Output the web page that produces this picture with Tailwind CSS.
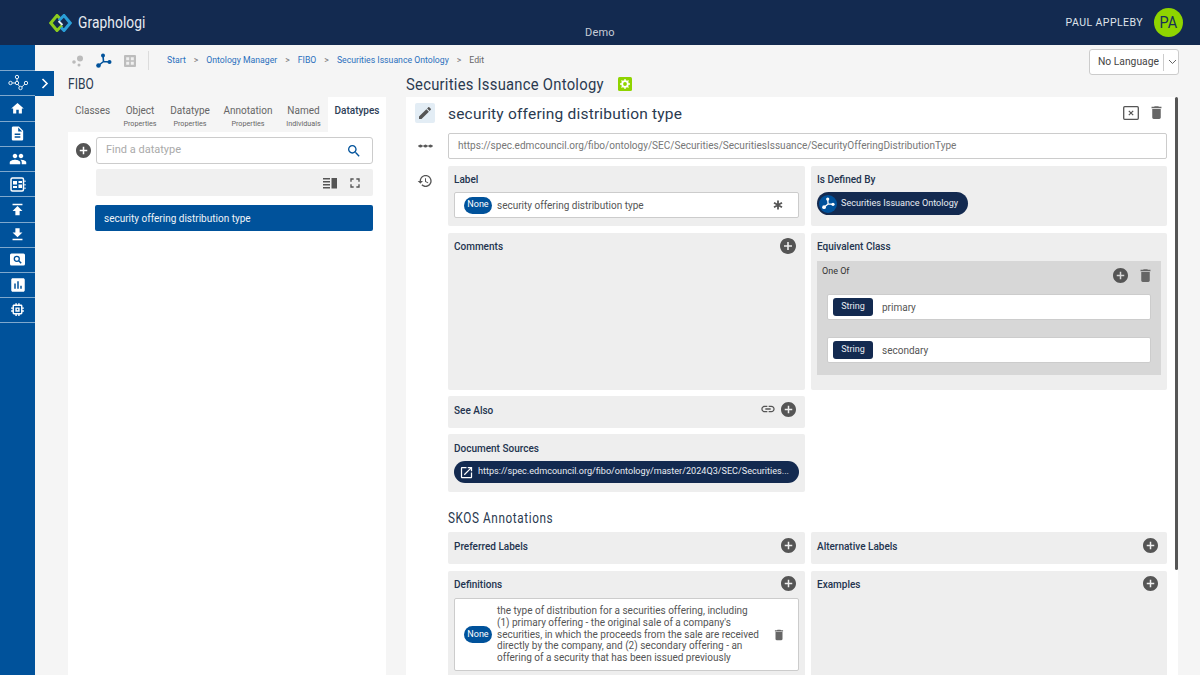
<!DOCTYPE html>
<html lang="en">
<head>
  <meta charset="UTF-8">
  <title>Graphologi</title>
  <script src="https://cdn.jsdelivr.net/npm/@tailwindcss/browser@4"></script>
</head>
<body class="bg-[#f5f5f5] text-[#444] font-['Roboto',sans-serif]">
<div class="h-[675px] w-[1200px] overflow-hidden flex flex-col">

  <!-- header -->
  <header class="h-[45px] shrink-0 bg-[#132a50] flex items-center relative">
    <div class="ml-[49px] flex items-center gap-[6px] w-[200px]">
      <svg width="23" height="18" viewBox="0 0 23 18" fill="none" stroke-width="3">
        <path d="M13 11.500L8 16.500L1.800 9L8 1.500L11 4.500" stroke="#8ccb1e"/>
        <path d="M10 6.500L15 1.500L21.200 9L15 16.500L12 13.500" stroke="#2a9fd8"/>
        <path d="M9.500 7L13.500 11" stroke="#e8f0f0" stroke-width="1.800"/>
      </svg>
      <span class="text-[17px] tracking-[0.1px] text-[#e8ecf2] leading-none origin-left scale-x-[0.81]">Graphologi</span>
    </div>
    <span class="absolute left-[585px] top-[26px] text-[11px] leading-[14px] tracking-[0.2px] text-[#c6ccd6]">Demo</span>
    <div class="ml-auto flex items-center">
      <span class="text-[10.500px] tracking-[0.45px] text-[#dfe3ea] mr-[11px]">PAUL APPLEBY</span>
      <span class="w-[29px] h-[29px] rounded-full bg-[#8fd400] text-[#173058] text-[17px] flex items-center justify-center mr-[17px]"><span class="scale-x-[0.85]">PA</span></span>
    </div>
  </header>

  <div class="flex flex-1 min-h-0">
    <!-- sidebar -->
    <nav class="w-[35px] shrink-0 bg-[#00529b] pt-[25px] text-white">
      <div class="h-[25.250px] border-t border-[#7fa8cd] flex items-center justify-center">
        <svg width="20" height="18" viewBox="0 0 20 18" fill="none" stroke="#fff" stroke-width="0.9"><circle cx="9" cy="3" r="1.700"/><circle cx="2.500" cy="9" r="1.700"/><circle cx="9" cy="9" r="1.700"/><circle cx="12.500" cy="14" r="1.700"/><circle cx="18" cy="9" r="1.700"/><path d="M9 4.700V7.300M4.200 9H7.300M10 10.400l1.500 2.200M13.800 13l3-3"/></svg>
      </div>
      <div class="h-[25.250px] border-t border-[#7fa8cd] flex items-center justify-center">
        <svg width="15" height="15" viewBox="0 0 24 24" fill="#fff"><path d="M10 20v-6h4v6h5v-8h3L12 3 2 12h3v8z"/></svg>
      </div>
      <div class="h-[25.250px] border-t border-[#7fa8cd] flex items-center justify-center">
        <svg width="17" height="17" viewBox="0 0 24 24" fill="#fff"><path d="M14 2H6c-1.100 0-1.990.9-1.990 2L4 20c0 1.100.89 2 1.990 2H18c1.100 0 2-.9 2-2V8l-6-6zm2 16H8v-2h8v2zm0-4H8v-2h8v2zm-3-5V3.500L18.500 9H13z"/></svg>
      </div>
      <div class="h-[25.250px] border-t border-[#7fa8cd] flex items-center justify-center">
        <svg width="18" height="18" viewBox="0 0 24 24" fill="#fff"><path d="M16 11c1.660 0 2.990-1.340 2.990-3S17.660 5 16 5c-1.660 0-3 1.340-3 3s1.340 3 3 3zm-8 0c1.660 0 2.990-1.340 2.990-3S9.660 5 8 5C6.340 5 5 6.340 5 8s1.340 3 3 3zm0 2c-2.330 0-7 1.170-7 3.500V19h14v-2.500c0-2.330-4.670-3.500-7-3.500zm8 0c-.29 0-.62.02-.97.05 1.160.84 1.970 1.970 1.970 3.450V19h6v-2.500c0-2.330-4.670-3.500-7-3.500z"/></svg>
      </div>
      <div class="h-[25.250px] border-t border-[#7fa8cd] flex items-center justify-center">
        <svg width="16" height="15" viewBox="0 0 16 15" fill="none" stroke="#fff"><rect x="1" y="1" width="12.500" height="13" rx="1.500" stroke-width="1.500"/><path d="M3 4h4v3.500H3zM8.500 4H12V6H8.500zM8.500 7.500H12V11H8.500zM3 9h4v2H3z" fill="#fff" stroke="none"/><path d="M15 3.500V5M15 7V8.500M15 10.500V12" stroke-width="1.100"/></svg>
      </div>
      <div class="h-[25.250px] border-t border-[#7fa8cd] flex items-center justify-center">
        <svg width="17" height="17" viewBox="0 0 24 24" fill="#fff"><path d="M5 4v2h14V4H5zm0 10h4v6h6v-6h4l-7-7-7 7z"/></svg>
      </div>
      <div class="h-[25.250px] border-t border-[#7fa8cd] flex items-center justify-center">
        <svg width="17" height="17" viewBox="0 0 24 24" fill="#fff"><path d="M19 9h-4V3H9v6H5l7 7 7-7zM5 18v2h14v-2H5z"/></svg>
      </div>
      <div class="h-[25.250px] border-t border-[#7fa8cd] flex items-center justify-center">
        <svg width="15" height="13" viewBox="0 0 15 13"><rect width="15" height="12" y="0.500" rx="1.500" fill="#fff"/><circle cx="6.800" cy="5.800" r="2.500" fill="none" stroke="#00529b" stroke-width="1.300"/><path d="M8.700 7.700l2.500 2.500" stroke="#00529b" stroke-width="1.500"/></svg>
      </div>
      <div class="h-[25.250px] border-t border-[#7fa8cd] flex items-center justify-center">
        <svg width="18" height="18" viewBox="0 0 24 24" fill="#fff"><path d="M19 3H5c-1.100 0-2 .9-2 2v14c0 1.100.9 2 2 2h14c1.100 0 2-.9 2-2V5c0-1.100-.9-2-2-2zM9 17H7v-7h2v7zm4 0h-2V7h2v10zm4 0h-2v-4h2v4z"/></svg>
      </div>
      <div class="h-[25.250px] border-y border-[#7fa8cd] flex items-center justify-center">
        <svg width="17" height="17" viewBox="0 0 24 24" fill="#fff"><path d="M15 9H9v6h6V9zm-2 4h-2v-2h2v2zm8-2V9h-2V7c0-1.100-.9-2-2-2h-2V3h-2v2h-2V3H9v2H7c-1.100 0-2 .9-2 2v2H3v2h2v2H3v2h2v2c0 1.100.9 2 2 2h2v2h2v-2h2v2h2v-2h2c1.100 0 2-.9 2-2v-2h2v-2h-2v-2h2zm-4 6H7V7h10v10z"/></svg>
      </div>
    </nav>

    <main class="flex-1 min-w-0 relative">
      <!-- sidebar expander -->
      <div class="absolute left-0 top-[26px] w-[19px] h-[25px] bg-[#00529b] flex items-center justify-center">
        <svg width="8" height="11" viewBox="0 0 8 11" fill="none" stroke="#fff" stroke-width="1.600"><path d="M1.500 1l4.500 4.500-4.500 4.500"/></svg>
      </div>

      <!-- toolbar -->
      <div class="h-[32px] flex items-center text-[8.700px] pl-[36px] pb-[1px]">
        <svg width="14" height="14" viewBox="0 0 14 14" fill="#bbb"><circle cx="9" cy="4.500" r="3"/><circle cx="3" cy="8" r="1.800"/><circle cx="8" cy="11" r="1.500"/></svg>
        <svg class="ml-[11px]" width="16" height="16" viewBox="0 0 16 16" fill="#00529b" stroke="#00529b"><path d="M7 2.500L7.500 8.500L2.500 12.500M7.500 8.500L13.500 9" stroke-width="1.600" fill="none"/><circle cx="7" cy="2.500" r="2" stroke="none"/><circle cx="2.500" cy="12.500" r="2.300" stroke="none"/><circle cx="13.500" cy="9" r="2" stroke="none"/></svg>
        <svg class="ml-[12px]" width="12" height="12" viewBox="0 0 12 12"><rect width="12" height="12" rx="1" fill="#bdbdbd"/><path d="M2.200 2.200h3v3h-3zM6.800 2.200h3v3h-3zM2.200 6.800h3v3h-3zM6.800 6.800h3v3h-3z" fill="#f0f0f0"/></svg>
        <div class="w-px h-[19px] bg-[#dcdcdc] ml-[12px] mr-[18px]"></div>
        <a class="text-[#2b70bd]">Start</a>
        <span class="mx-[8px] text-[#777]">&gt;</span>
        <a class="text-[#2b70bd]">Ontology Manager</a>
        <span class="mx-[8px] text-[#777]">&gt;</span>
        <a class="text-[#2b70bd]">FIBO</a>
        <span class="mx-[8px] text-[#777]">&gt;</span>
        <a class="text-[#2b70bd]">Securities Issuance Ontology</a>
        <span class="mx-[8px] text-[#777]">&gt;</span>
        <span class="text-[#666]">Edit</span>
        <div class="ml-auto mr-[21px] mt-[3px] w-[90px] h-[26px] shrink-0 bg-white border border-[#ccc] rounded-[3px] flex items-center text-[10.300px] text-[#444] pl-[8px]">
          <span class="whitespace-nowrap">No Language</span>
          <span class="w-px h-[17px] bg-[#ccc] ml-[4px] shrink-0"></span>
          <svg class="ml-[4px] shrink-0" width="9" height="6" viewBox="0 0 9 6" fill="none" stroke="#666"><path d="M1 1l3.500 3.500L8 1"/></svg>
        </div>
      </div>

      <div class="flex h-[598px]">
        <!-- left pane -->
        <section class="ml-[33px] w-[318px] flex flex-col">
          <h2 class="h-[20px] shrink-0 text-[15px] leading-[14px] tracking-[0.1px] text-[#2a3a50] origin-left scale-x-[0.8]">FIBO</h2>
          <div class="h-[35px] shrink-0 flex text-[10px] pl-[7px]">
            <div class="w-[42px] pt-[8px] leading-[12px] text-[#666]">Classes</div>
            <div class="w-[46px] pt-[8px] leading-[12px] text-center text-[#666]"><div>Object</div><div class="text-[7.200px] leading-[13px]">Properties</div></div>
            <div class="w-[54px] pt-[8px] leading-[12px] text-center text-[#666]"><div>Datatype</div><div class="text-[7.200px] leading-[13px]">Properties</div></div>
            <div class="w-[62px] pt-[8px] leading-[12px] text-center text-[#666]"><div>Annotation</div><div class="text-[7.200px] leading-[13px]">Properties</div></div>
            <div class="w-[49px] pt-[8px] leading-[12px] text-center text-[#666]"><div>Named</div><div class="text-[7.200px] leading-[13px]">Individuals</div></div>
            <div class="w-[58px] pt-[8px] leading-[12px] text-center bg-white font-medium text-[#2c3e58]">Datatypes</div>
          </div>
          <div class="flex-1 min-h-0 bg-white pt-[5px]">
            <div class="flex items-center pl-[8px] h-[27px]">
              <svg class="shrink-0" width="15" height="15" viewBox="2 2 20 20" fill="#555"><path d="M12 2C6.480 2 2 6.480 2 12s4.480 10 10 10 10-4.480 10-10S17.520 2 12 2zm5 11h-4v4h-2v-4H7v-2h4V7h2v4h4v2z"/></svg>
              <div class="ml-[5px] w-[277px] h-[27px] border border-[#ccc] rounded-[3px] flex items-center justify-between pl-[9px] pr-[10px] text-[11px] text-[#aaa]">
                <span>Find a datatype</span>
                <svg width="16" height="16" viewBox="0 0 24 24" fill="#00529b"><path d="M15.500 14h-.79l-.28-.27C15.410 12.590 16 11.110 16 9.500 16 5.910 13.090 3 9.500 3S3 5.910 3 9.500 5.910 16 9.500 16c1.610 0 3.090-.59 4.230-1.570l.27.28v.79l5 4.990L20.490 19l-4.990-5zm-6 0C7.010 14 5 11.990 5 9.500S7.010 5 9.500 5 14 7.010 14 9.500 11.990 14 9.500 14z"/></svg>
              </div>
            </div>
            <div class="ml-[28px] mt-[5px] w-[277px] h-[27px] bg-[#f0f0f0] rounded-[2px] flex items-center justify-end gap-[10px] pr-[10px]">
              <svg width="14" height="12" viewBox="0 0 14 12" fill="#555"><path d="M0 1h7v1.400H0zM0 4h7v1.400H0zM0 7h7v1.400H0zM0 10h7v1.400H0zM8.500 1H14v10.400H8.500z"/></svg>
              <svg width="16" height="16" viewBox="0 0 24 24" fill="#555"><path d="M7 14H5v5h5v-2H7v-3zm-2-4h2V7h3V5H5v5zm12 7h-3v2h5v-5h-2v3zM14 5v2h3v3h2V5h-5z"/></svg>
            </div>
            <div class="ml-[27px] mt-[9px] w-[278px] h-[26px] bg-[#00529b] rounded-[2px] flex items-center pl-[9px] text-[10px] text-[#f0f4f8]">security offering distribution type</div>
          </div>
        </section>

        <!-- right pane -->
        <section class="ml-[20px] w-[772px] flex flex-col">
          <div class="h-[20px] shrink-0 flex items-start">
            <h1 class="w-[196px] whitespace-nowrap text-[17px] leading-[14px] tracking-[0.3px] text-[#2a3a50] origin-left scale-x-[0.87]">Securities Issuance Ontology</h1>
            <svg class="ml-[16px]" width="14" height="14" viewBox="0 0 14 14"><rect width="14" height="14" rx="1.500" fill="#8fd400"/><circle cx="7" cy="7" r="2.800" fill="none" stroke="#fff" stroke-width="1.800"/><path d="M7 2v2M7 10v2M2 7h2M10 7h2M3.500 3.500l1.400 1.400M9.100 9.100l1.400 1.400M10.500 3.500L9.100 4.900M4.900 9.100l-1.400 1.400" stroke="#fff" stroke-width="1.300"/></svg>
          </div>
          <div class="flex-1 min-h-0 overflow-hidden bg-white flex relative pl-[9px]">
            <!-- action rail -->
            <div class="w-[20px] shrink-0 flex flex-col items-center pt-[6px]">
              <div class="w-[20px] h-[20px] bg-[#e3edf5] rounded-[2px] flex items-center justify-center">
                <svg width="16" height="16" viewBox="0 0 24 24" fill="#555"><path d="M3 17.250V21h3.750L17.810 9.940l-3.750-3.750L3 17.250zM20.710 7.040c.39-.39.39-1.020 0-1.410l-2.340-2.340c-.39-.39-1.020-.39-1.410 0l-1.830 1.830 3.750 3.750 1.830-1.830z"/></svg>
              </div>
              <svg class="mt-[20px]" width="15" height="6" viewBox="0 0 15 6" fill="#555"><rect y="2.500" width="15" height="1"/><circle cx="2.500" cy="3" r="1.600"/><circle cx="7.500" cy="3" r="1.600"/><circle cx="12.500" cy="3" r="1.600"/></svg>
              <svg class="mt-[24px]" width="16" height="16" viewBox="0 0 24 24" fill="#555"><path d="M13 3c-4.970 0-9 4.030-9 9H1l3.890 3.890.07.14L9 12H6c0-3.870 3.130-7 7-7s7 3.130 7 7-3.130 7-7 7c-1.930 0-3.680-.79-4.940-2.060l-1.420 1.420C8.270 19.990 10.510 21 13 21c4.970 0 9-4.030 9-9s-4.030-9-9-9zm-1 5v5l4.280 2.540.72-1.210-3.500-2.080V8H12z"/></svg>
            </div>

            <!-- detail column -->
            <div class="ml-[13px] w-[719px]">
              <div class="h-[36px] flex items-center justify-between pr-[2px]">
                <h2 class="text-[15.500px] tracking-[0.2px] text-[#2a3a50]">security offering distribution type</h2>
                <div class="flex items-center gap-[9px] -mt-[5px]">
                  <svg width="16" height="14" viewBox="0 0 16 14" fill="none" stroke="#555"><rect x="0.700" y="0.700" width="14.600" height="12.600" rx="1" stroke-width="1.300"/><path d="M5.800 4.800l4.400 4.400M10.200 4.800L5.800 9.200" stroke-width="1.200"/></svg>
                  <svg width="17" height="17" viewBox="0 0 24 24" fill="#666"><path d="M6 19c0 1.100.9 2 2 2h8c1.100 0 2-.9 2-2V7H6v12zM19 4h-3.500l-1-1h-5l-1 1H5v2h14V4z"/></svg>
                </div>
              </div>
              <div class="h-[26px] border border-[#ccc] rounded-[2px] flex items-center pl-[9px] text-[10.050px] text-[#777]">https://spec.edmcouncil.org/fibo/ontology/SEC/Securities/SecuritiesIssuance/SecurityOfferingDistributionType</div>

              <div class="mt-[7px] grid grid-cols-[357px_356px] gap-x-[6px] text-[10px]">
                <!-- label -->
                <div class="h-[60px] bg-[#eeeeee] rounded-[2px] px-[6px] pt-[7px]">
                  <div class="font-medium text-[#23344f] leading-[14px]">Label</div>
                  <div class="mt-[5px] h-[26px] bg-white border border-[#ccc] rounded-[2px] flex items-center pl-[9px] text-[#555]">
                    <span class="w-[28px] h-[17px] rounded-full bg-[#00529b] text-white flex items-center justify-center text-[9px]">None</span>
                    <span class="ml-[5px]">security offering distribution type</span>
                    <svg class="ml-auto mr-[15px]" width="10" height="10" viewBox="0 0 10 10" stroke="#555" stroke-width="1.800"><path d="M5 0.500v9M1 2.700l8 4.600M9 2.700L1 7.300"/></svg>
                  </div>
                </div>
                <div class="h-[60px] bg-[#eeeeee] rounded-[2px] px-[6px] pt-[7px]">
                  <div class="font-medium text-[#23344f] leading-[14px]">Is Defined By</div>
                  <div class="mt-[5px] w-[151px] h-[23px] rounded-full bg-[#132a50] flex items-center pl-[2px] text-[9.100px] text-[#e8ecf2] whitespace-nowrap">
                    <span class="w-[18px] h-[18px] shrink-0 rounded-full bg-[#00529b] flex items-center justify-center">
                      <svg width="13" height="13" viewBox="0 0 16 16" fill="#fff" stroke="#fff"><path d="M7 2.500L7.500 8.500L2.500 12.500M7.500 8.500L13.500 9" stroke-width="1.600" fill="none"/><circle cx="7" cy="2.500" r="2" stroke="none"/><circle cx="2.500" cy="12.500" r="2.300" stroke="none"/><circle cx="13.500" cy="9" r="2" stroke="none"/></svg>
                    </span>
                    <span class="ml-[4px]">Securities Issuance Ontology</span>
                  </div>
                </div>

                <!-- comments / equivalent class -->
                <div class="mt-[7px] h-[157px] bg-[#eeeeee] rounded-[2px] pl-[6px] pr-[9px] pt-[5px]">
                  <div class="flex items-center justify-between h-[16px]">
                    <span class="font-medium text-[#23344f] mt-[1px]">Comments</span>
                    <svg width="16" height="16" viewBox="2 2 20 20" fill="#555"><path d="M12 2C6.480 2 2 6.480 2 12s4.480 10 10 10 10-4.480 10-10S17.520 2 12 2zm5 11h-4v4h-2v-4H7v-2h4V7h2v4h4v2z"/></svg>
                  </div>
                </div>
                <div class="mt-[7px] h-[157px] bg-[#eeeeee] rounded-[2px] px-[6px] pt-[8px]">
                  <div class="font-medium text-[#23344f] leading-[12px]">Equivalent Class</div>
                  <div class="mt-[8px] h-[114px] bg-[#d7d7d7] pl-[5px] pr-[10px]">
                    <div class="flex items-start justify-between h-[33px] text-[9px] text-[#333] pt-[4px]">
                      <span class="leading-[12px]">One Of</span>
                      <span class="flex items-center gap-[9px] pt-[2px] -mr-[3px]">
                        <svg width="15" height="15" viewBox="2 2 20 20" fill="#555"><path d="M12 2C6.480 2 2 6.480 2 12s4.480 10 10 10 10-4.480 10-10S17.520 2 12 2zm5 11h-4v4h-2v-4H7v-2h4V7h2v4h4v2z"/></svg>
                        <svg width="17" height="17" viewBox="0 0 24 24" fill="#666"><path d="M6 19c0 1.100.9 2 2 2h8c1.100 0 2-.9 2-2V7H6v12zM19 4h-3.500l-1-1h-5l-1 1H5v2h14V4z"/></svg>
                      </span>
                    </div>
                    <div class="ml-[5px] h-[26px] bg-white border border-[#ccc] rounded-[2px] flex items-center pl-[5px] text-[#555]">
                      <span class="w-[40px] h-[18px] rounded-[3px] bg-[#132a50] text-[#e8ecf2] text-[9px] flex items-center justify-center">String</span>
                      <span class="ml-[9px]">primary</span>
                    </div>
                    <div class="ml-[5px] mt-[17px] h-[26px] bg-white border border-[#ccc] rounded-[2px] flex items-center pl-[5px] text-[#555]">
                      <span class="w-[40px] h-[18px] rounded-[3px] bg-[#132a50] text-[#e8ecf2] text-[9px] flex items-center justify-center">String</span>
                      <span class="ml-[9px]">secondary</span>
                    </div>
                  </div>
                </div>

                <!-- see also -->
                <div class="col-start-1 mt-[6px] h-[32px] bg-[#eeeeee] rounded-[2px] pl-[6px] pr-[9px] pt-[5px]">
                  <div class="flex items-center h-[16px]">
                    <span class="font-medium text-[#23344f] mt-[2px]">See Also</span>
                    <svg class="ml-auto mr-[5px]" width="16" height="16" viewBox="0 0 24 24" fill="#555"><path d="M3.900 12c0-1.710 1.390-3.100 3.100-3.100h4V7H7c-2.760 0-5 2.240-5 5s2.240 5 5 5h4v-1.900H7c-1.710 0-3.100-1.390-3.100-3.100zM8 13h8v-2H8v2zm9-6h-4v1.900h4c1.710 0 3.100 1.390 3.100 3.100s-1.390 3.100-3.100 3.100h-4V17h4c2.760 0 5-2.240 5-5s-2.240-5-5-5z"/></svg>
                    <svg width="15" height="15" viewBox="2 2 20 20" fill="#555"><path d="M12 2C6.480 2 2 6.480 2 12s4.480 10 10 10 10-4.480 10-10S17.520 2 12 2zm5 11h-4v4h-2v-4H7v-2h4V7h2v4h4v2z"/></svg>
                  </div>
                </div>

                <!-- document sources -->
                <div class="col-start-1 mt-[6px] h-[58px] bg-[#eeeeee] rounded-[2px] px-[6px] pt-[9px]">
                  <div class="font-medium text-[#23344f] leading-[12px]">Document Sources</div>
                  <div class="mt-[6px] h-[22px] rounded-full bg-[#132a50] flex items-center pl-[5px] text-[9.100px] text-[#e8ecf2] whitespace-nowrap">
                    <svg class="shrink-0" width="15" height="15" viewBox="0 0 24 24" fill="#fff"><path d="M19 19H5V5h7V3H5c-1.110 0-2 .89-2 2v14c0 1.100.89 2 2 2h14c1.100 0 2-.9 2-2v-7h-2v7zM14 3v2h3.590l-9.830 9.830 1.410 1.410L19 6.410V10h2V3h-7z"/></svg>
                    <span class="ml-[4px]">https://spec.edmcouncil.org/fibo/ontology/master/2024Q3/SEC/Securities...</span>
                  </div>
                </div>
              </div>

              <h3 class="mt-[17px] h-[23px] text-[14px] leading-[18px] tracking-[0.7px] text-[#2a3a50] origin-left scale-x-[0.84] whitespace-nowrap">SKOS Annotations</h3>

              <div class="grid grid-cols-[357px_356px] gap-x-[6px] text-[10px]">
                <div class="h-[32px] bg-[#eeeeee] rounded-[2px] pl-[6px] pr-[9px] pt-[5px]">
                  <div class="flex items-center justify-between h-[16px]">
                    <span class="font-medium text-[#23344f] mt-[2px]">Preferred Labels</span>
                    <svg width="15" height="15" viewBox="2 2 20 20" fill="#555"><path d="M12 2C6.480 2 2 6.480 2 12s4.480 10 10 10 10-4.480 10-10S17.520 2 12 2zm5 11h-4v4h-2v-4H7v-2h4V7h2v4h4v2z"/></svg>
                  </div>
                </div>
                <div class="h-[32px] bg-[#eeeeee] rounded-[2px] pl-[6px] pr-[9px] pt-[5px]">
                  <div class="flex items-center justify-between h-[16px]">
                    <span class="font-medium text-[#23344f] mt-[2px]">Alternative Labels</span>
                    <svg width="15" height="15" viewBox="2 2 20 20" fill="#555"><path d="M12 2C6.480 2 2 6.480 2 12s4.480 10 10 10 10-4.480 10-10S17.520 2 12 2zm5 11h-4v4h-2v-4H7v-2h4V7h2v4h4v2z"/></svg>
                  </div>
                </div>
                <div class="mt-[7px] h-[110px] bg-[#eeeeee] rounded-[2px] px-[6px] pt-[4px]">
                  <div class="flex items-center justify-between h-[16px] pr-[3px]">
                    <span class="font-medium text-[#23344f] mt-[2px]">Definitions</span>
                    <svg width="15" height="15" viewBox="2 2 20 20" fill="#555"><path d="M12 2C6.480 2 2 6.480 2 12s4.480 10 10 10 10-4.480 10-10S17.520 2 12 2zm5 11h-4v4h-2v-4H7v-2h4V7h2v4h4v2z"/></svg>
                  </div>
                  <div class="mt-[7px] h-[73px] bg-white border border-[#ccc] rounded-[2px] flex items-center pl-[9px] text-[#555] leading-[11.700px]">
                    <span class="w-[28px] h-[17px] shrink-0 rounded-full bg-[#00529b] text-white flex items-center justify-center text-[9px]">None</span>
                    <span class="ml-[5px] w-[272px] shrink-0">the type of distribution for a securities offering, including<br>(1) primary offering - the original sale of a company's<br>securities, in which the proceeds from the sale are received<br>directly by the company, and (2) secondary offering - an<br>offering of a security that has been issued previously</span>
                    <svg class="ml-[3px]" width="14" height="14" viewBox="0 0 24 24" fill="#666"><path d="M6 19c0 1.100.9 2 2 2h8c1.100 0 2-.9 2-2V7H6v12zM19 4h-3.500l-1-1h-5l-1 1H5v2h14V4z"/></svg>
                  </div>
                </div>
                <div class="mt-[7px] h-[110px] bg-[#eeeeee] rounded-[2px] pl-[6px] pr-[9px] pt-[4px]">
                  <div class="flex items-center justify-between h-[16px]">
                    <span class="font-medium text-[#23344f] mt-[2px]">Examples</span>
                    <svg width="15" height="15" viewBox="2 2 20 20" fill="#555"><path d="M12 2C6.480 2 2 6.480 2 12s4.480 10 10 10 10-4.480 10-10S17.520 2 12 2zm5 11h-4v4h-2v-4H7v-2h4V7h2v4h4v2z"/></svg>
                  </div>
                </div>
              </div>
            </div>

            <!-- scrollbar -->
            <div class="absolute right-0 top-0 w-[3px] h-[473px] bg-[#555] rounded-full"></div>
          </div>
        </section>
      </div>
    </main>
  </div>
</div>
</body>
</html>
